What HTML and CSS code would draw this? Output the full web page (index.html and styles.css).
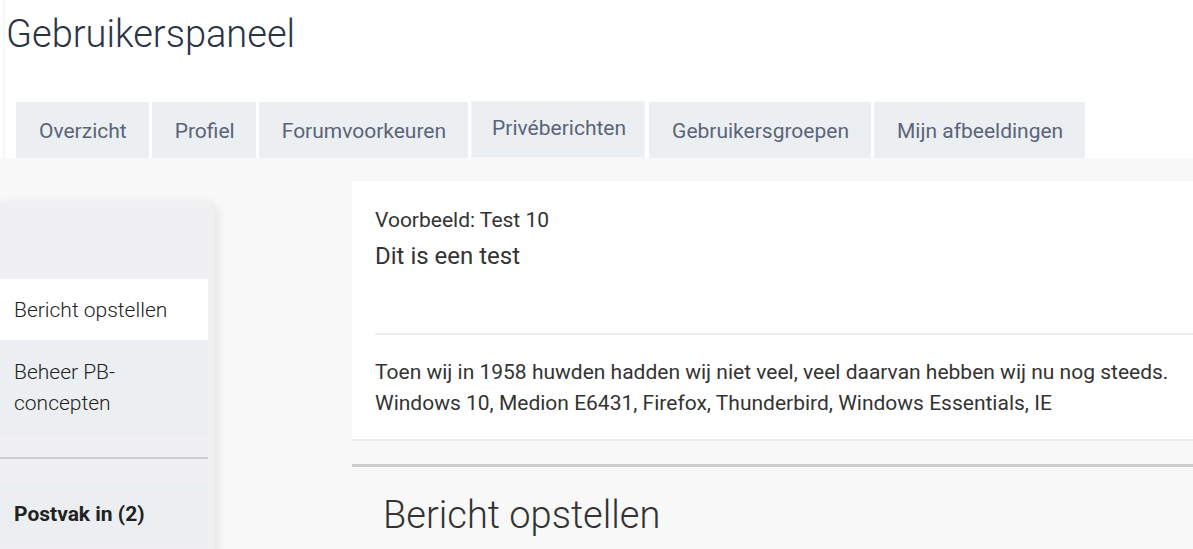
FILE: index.html
```html
<!DOCTYPE html>
<html lang="nl">
<head>
<meta charset="utf-8">
<title>Gebruikerspaneel</title>
<link rel="stylesheet" href="styles.css">
</head>
<body>
<div class="page">
  <header class="head">
    <h1 class="title">Gebruikerspaneel</h1>
    <nav class="tabs">
      <a class="tab">Overzicht</a>
      <a class="tab">Profiel</a>
      <a class="tab">Forumvoorkeuren</a>
      <a class="tab tab-active">Privéberichten</a>
      <a class="tab">Gebruikersgroepen</a>
      <a class="tab">Mijn afbeeldingen</a>
    </nav>
  </header>
  <div class="content">
    <aside class="sidebar">
      <div class="side-head"></div>
      <a class="side-item side-current">Bericht opstellen</a>
      <a class="side-item side-two">Beheer PB-concepten</a>
      <hr class="side-sep">
      <a class="side-item side-bold">Postvak in (2)</a>
    </aside>
    <main class="main">
      <section class="preview">
        <div class="preview-label">Voorbeeld: Test 10</div>
        <div class="preview-subject">Dit is een test</div>
        <hr class="preview-sep">
        <p class="preview-body">Toen wij in 1958 huwden hadden wij niet veel, veel daarvan hebben wij nu nog steeds.<br>Windows 10, Medion E6431, Firefox, Thunderbird, Windows Essentials, IE</p>
      </section>
      <hr class="main-sep">
      <h2 class="compose-title">Bericht opstellen</h2>
    </main>
  </div>
</div>
</body>
</html>
```
FILE: styles.css
```css
* { box-sizing: border-box; }
html, body { margin: 0; padding: 0; }
body {
  background: #ffffff;
  font-family: Roboto, "Liberation Sans", Arial, sans-serif;
  color: #333;
  overflow: hidden;
}
.page {
  height: 549px;
  border-left: 2px solid #f6f6f6;
  margin-left: 3px;
  display: flex;
  flex-direction: column;
}
.head {
  padding-top: 11px;
}
.title {
  margin: 0 0 0 1px;
  font-size: 38px;
  line-height: 46px;
  font-weight: 300;
  color: #2b3442;
}
.tabs {
  display: flex;
  gap: 3px;
  margin-top: 45px;
  padding-left: 11px;
  height: 56px;
}
.tab {
  display: flex;
  align-items: center;
  padding: 2px 22px 0 23px;
  background: #eceff1;
  color: #5a6479;
  font-size: 21px;
  text-decoration: none;
}
.tab:nth-child(2) { padding-right: 21px; }
.tab-active {
  padding: 0 18px 4px 20px;
  height: 55px;
  margin-left: 1px;
  margin-right: 2px;
  box-shadow: 0 0 0 1px #f4f4f4;
}
.content {
  flex: 1;
  background: #f8f8f8;
  display: flex;
  align-items: flex-start;
  margin-left: -5px;
}
.sidebar {
  width: 215px;
  margin-top: 44px;
  background: #f0f0f2;
  border-radius: 0 14px 0 0;
  box-shadow: 4px 0 8px rgba(0, 0, 0, 0.07);
  padding-right: 7px;
  padding-bottom: 10px;
  display: flex;
  flex-direction: column;
}
.side-head { height: 77px; }
.side-item {
  display: block;
  padding: 16px 14px 14px;
  font-size: 21px;
  line-height: 31px;
  font-weight: 300;
  color: #222;
  background: #eceff1;
}
.side-current {
  background: #ffffff;
}
.side-two {
  padding-top: 17px;
  padding-bottom: 15px;
}
.side-sep {
  margin: 23px 0 24px;
  border: 0;
  height: 2px;
  background: #cdcdcd;
}
.side-bold {
  font-weight: 700;
  padding-top: 16px;
  padding-bottom: 15px;
}
.main {
  flex: 1;
  margin-left: 137px;
  margin-top: 23px;
}
.preview {
  background: #ffffff;
  padding: 25px 0 20px 23px;
  border-bottom: 2px solid #ededed;
}
.preview-label {
  font-size: 21px;
  line-height: 28px;
  color: #333;
}
.preview-subject {
  font-size: 24px;
  line-height: 32px;
  margin-top: 6px;
  color: #333;
}
.preview-sep {
  margin: 61px 0 0;
  border: 0;
  height: 2px;
  background: #eeeeee;
}
.preview-body {
  margin: 22px 0 0;
  font-size: 21px;
  line-height: 31px;
  color: #333;
}
.main-sep {
  margin: 23px 0 0;
  border: 0;
  height: 3px;
  background: #cccccc;
}
.compose-title {
  margin: 25px 0 0 31px;
  font-size: 38px;
  line-height: 46px;
  font-weight: 300;
  color: #333;
}
```
